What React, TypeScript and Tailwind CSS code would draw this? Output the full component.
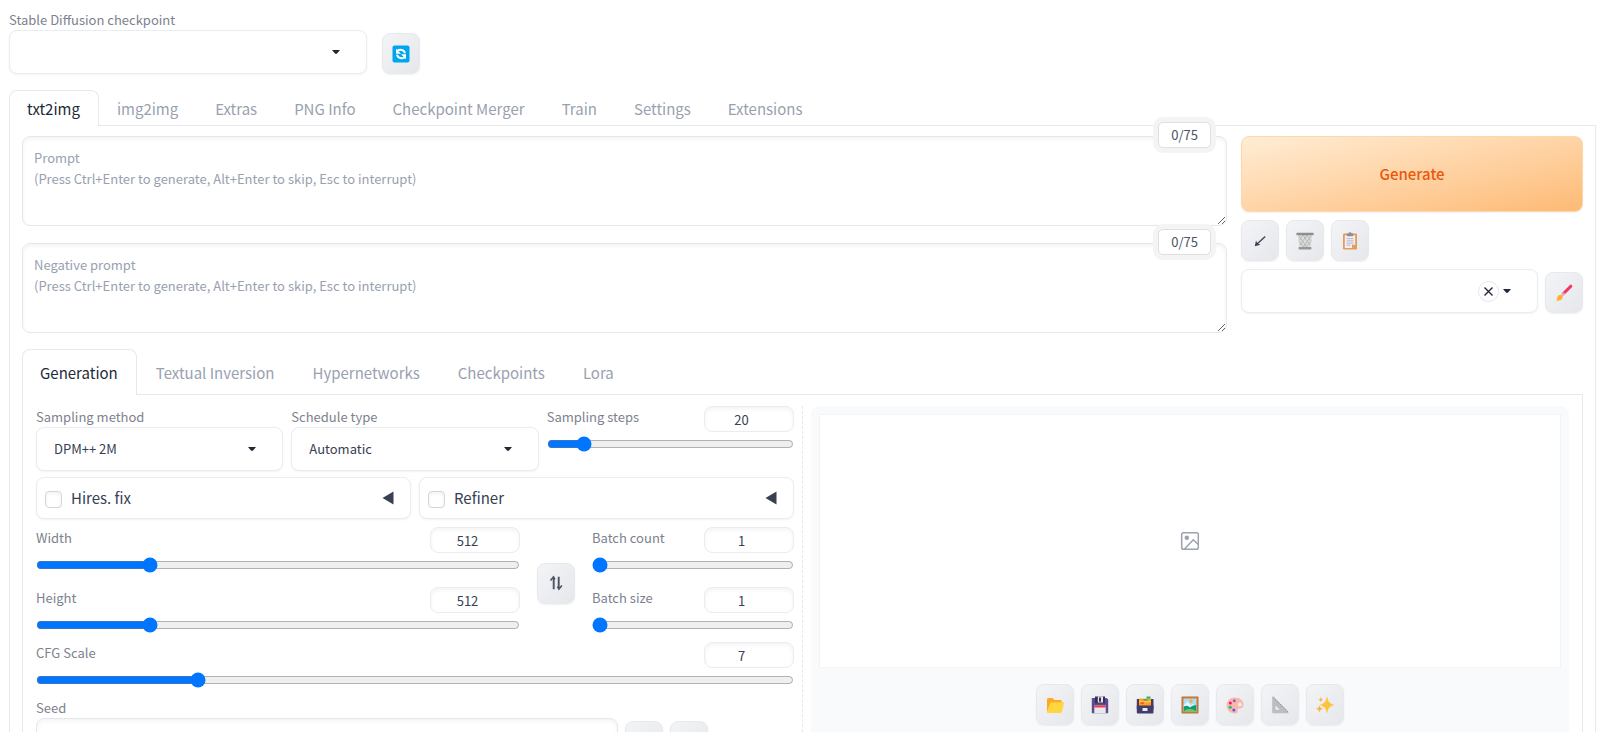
import React, { useId, useState } from "react";

/* ---------- icons ---------- */

const Svg = ({ children, box = 18 }: { children: React.ReactNode; box?: number }) => (
  <svg width={box} height={box} viewBox="0 0 18 18" aria-hidden="true">
    {children}
  </svg>
);

const RefreshIcon = () => (
  <Svg>
    <rect x="0.5" y="0.5" width="17" height="17" rx="2" fill="#00a6ed" />
    <path d="M5.500 5.500C7.500 4.300 12 4.200 13 8.200" fill="none" stroke="#fff" strokeWidth="2" />
    <path d="M4 3.800v5h5z" fill="#fff" />
    <path d="M12.500 12.500C10.500 13.700 6 13.800 5 9.800" fill="none" stroke="#fff" strokeWidth="2" />
    <path d="M14 14.200v-5H9z" fill="#fff" />
  </Svg>
);

const ArrowIcon = () => (
  <Svg>
    <path d="M14.200 4.500 5.500 12.500" stroke="#374151" strokeWidth="1.300" fill="none" />
    <path d="M3.800 14.200 5 8.600l1.300 2.700 3.200 1.500z" fill="#374151" />
  </Svg>
);

const TrashIcon = () => (
  <Svg>
    <path d="M1.800 2.500h14.400l-1.300 13H3.100z" fill="#dcdcdc" />
    <path
      d="M3 4l8 11.500M7 3l7 10M11 3l4 6M3.500 9.500 8 15.500M15 4 7 15.500M11 3 4 13M7 3 3 8.500M14.500 9.500 10 15.500"
      stroke="#adadad"
      strokeWidth="0.800"
      fill="none"
    />
    <rect x="0.500" y="0.800" width="17" height="2.400" rx="0.500" fill="#8e8e8e" />
    <rect x="2.600" y="15" width="12.800" height="2.400" rx="0.500" fill="#979797" />
  </Svg>
);

const ClipboardIcon = () => (
  <Svg>
    <rect x="2" y="1.500" width="14" height="16" rx="1.300" fill="#e39d54" />
    <path d="M3.800 3.300h10.400v9.400l-3.200 3.200H3.800z" fill="#f3eef8" />
    <path d="M11 15.900v-3.200h3.200z" fill="#ef8f4b" />
    <rect x="5.800" y="1.600" width="6.400" height="2.600" rx="0.600" fill="#8d8d93" />
    <circle cx="9" cy="1.600" r="1.400" fill="#8d8d93" />
    <path d="M5.500 6.700h7M5.500 8.900h7M5.500 11.100h7M5.500 13.200h4" stroke="#b0abb8" strokeWidth="0.900" />
  </Svg>
);

const BrushIcon = () => (
  <Svg>
    <path d="M15.800 2.200 8.300 9.700" stroke="#f8315f" strokeWidth="3" strokeLinecap="round" />
    <path d="M8.600 8.200 6.200 10.600l1.700 1.700 2.400-2.400z" fill="#c9b8c9" />
    <path d="M6.600 11c1.500.8 1.400 2.600.6 3.800C5.900 16.800 3 17 1 16.600c1.200-.7 1-1.600 1.300-3 .400-2 2.400-3.300 4.300-2.600z" fill="#ffb02e" />
  </Svg>
);

const FolderIcon = () => (
  <Svg>
    <path d="M1 3.500C1 2.700 1.500 2 2.400 2h4.200l1.800 2h5.800c1 0 1.600.6 1.600 1.500V15H1z" fill="#ffa826" />
    <path d="M4.500 6.200h12.700c.7 0 1 .5.800 1.100l-2 8.300c-.2.900-.8 1.400-1.700 1.400H2.300c-1 0-1.400-.6-1.300-1.300z" fill="#ffd540" />
  </Svg>
);

const FloppyIcon = () => (
  <Svg>
    <path d="M1 2h14.500L17.200 3.500V16.200c0 .6-.4 1-1 1H1.800c-.6 0-1-.4-1-1V2z" fill="#5d4b8f" />
    <path d="M4 0.500h10v6.800H4z" fill="#3b2d55" />
    <path d="M6.800 0.500h5.200v6H6.800z" fill="#e9e6ef" />
    <path d="M8 1.500h2v4.200H8z" fill="#3b2d55" />
    <path d="M3.300 9.500h11.400v7.700H3.300z" fill="#e8e8ec" />
    <path d="M3.300 9.500h11.400v2H3.300z" fill="#ee3f49" />
  </Svg>
);

const CardBoxIcon = () => (
  <Svg>
    <path d="M0.800 3h3v10h-3zM14.500 3h3v10h-3z" fill="#453a69" />
    <path d="M3 2.600h12v8.500H3z" fill="#f9a11d" />
    <path d="M10.500 0.500h4v2.200h-4z" fill="#2bb673" />
    <path d="M3 4.800h12v1.500H3z" fill="#ffc63a" />
    <path d="M7.500 3.200h3.800v1.400H7.500z" fill="#1fa6a0" />
    <path d="M4.500 6.300h3.500v1.500H4.500z" fill="#f0503c" />
    <path d="M0.800 9.500h16.700v7c0 .6-.4.900-.9.900H1.700c-.5 0-.9-.3-.9-.9z" fill="#433b6b" />
    <rect x="6.500" y="12" width="5" height="3" rx="0.500" fill="#eceaf2" />
  </Svg>
);

const PictureIcon = () => (
  <Svg>
    <rect x="0.500" y="0.500" width="17" height="17" rx="0.800" fill="#b97138" />
    <rect x="1.600" y="1.600" width="14.800" height="14.800" fill="#d68b44" />
    <rect x="2.600" y="2.600" width="12.800" height="12.800" fill="#a8dcf8" />
    <circle cx="10" cy="5" r="1.700" fill="#ffa93b" />
    <path d="M2.600 9.500 6.500 5.500l3.300 4 2-1.800 3.600 3V15.400H2.600z" fill="#e8f5fb" />
    <path d="M2.600 10.500c3-1.800 5-.3 6.500 1 2-2.200 4.500-2.700 6.300-2v5.900H2.600z" fill="#109a84" />
    <path d="M2.600 15.400c3-3.300 9-3.300 12.800 0z" fill="#7ccb3e" />
  </Svg>
);

const PaletteIcon = () => (
  <Svg>
    <path
      d="M8.800 1.500c4.800 0 8.700 2.800 8.700 6.800 0 3-2 4.500-4.400 4.300-1.300-.1-1.700.8-1.300 1.900.5 1.500-.6 2.900-2.800 2.900C4 17.400.6 13.800.6 9.400c0-4.500 3.700-7.900 8.200-7.900z"
      fill="#fbb7a8"
    />
    <circle cx="13.800" cy="8.500" r="1.900" fill="#eef0f3" />
    <circle cx="8.300" cy="4.700" r="1.500" fill="#8d65c5" />
    <circle cx="4.300" cy="7" r="1.500" fill="#f0157c" />
    <circle cx="4.300" cy="11.200" r="1.500" fill="#12c47a" />
    <circle cx="7.800" cy="14" r="1.500" fill="#3f5fff" />
  </Svg>
);

const RulerIcon = () => (
  <Svg>
    <path
      d="M1.200.800c0-.6.500-.7.900-.3L17.300 16c.5.500.3 1.200-.4 1.200H2.200c-.6 0-1-.4-1-1zM4.500 9.500v4.300h4.300z"
      fillRule="evenodd"
      fill="#bdbdc0"
    />
    <path d="M2.500 1.500 17 16" stroke="#998ea4" strokeWidth="1.200" strokeDasharray="1.200 1.200" />
  </Svg>
);

const SparklesIcon = () => (
  <Svg>
    <path d="M11 1.200c.9 4.300 2.300 6.300 6.700 7.700-4.400 1.400-5.800 3.400-6.700 7.700-.9-4.300-2.300-6.300-6.700-7.700 4.400-1.400 5.800-3.400 6.700-7.700z" fill="#fcc33c" stroke="#fcc33c" strokeWidth="0.500" />
    <path d="M3.500 9.600c.4 1.900 1.100 2.700 3.100 3.200-2 .5-2.700 1.300-3.100 3.200-.4-1.900-1.100-2.700-3.100-3.200 2-.5 2.700-1.300 3.100-3.200z" fill="#f9b53a" stroke="#f9b53a" strokeWidth="0.400" />
    <path d="M4.800 1.500c.3 1.300.8 1.900 2.100 2.200-1.300.3-1.800.9-2.100 2.200-.3-1.300-.8-1.900-2.100-2.200 1.300-.3 1.800-.9 2.100-2.200z" fill="#f9b53a" stroke="#f9b53a" strokeWidth="0.400" />
  </Svg>
);

const SwapIcon = () => (
  <Svg>
    <path d="M6.700 15.200V4M11.700 2.800V14" stroke="#4b5563" strokeWidth="1.900" fill="none" />
    <path d="M3.500 6.500 6.500 3l1.400 2.500M14.900 11.500l-3 3.500-1.400-2.500" stroke="#4b5563" strokeWidth="1.600" fill="none" />
  </Svg>
);

const DiceIcon = () => (
  <Svg>
    <rect x="1" y="1" width="16" height="16" rx="3" fill="#f4f4f4" stroke="#c5c5c9" />
    <circle cx="5.500" cy="5.500" r="1.500" fill="#433b6b" />
    <circle cx="9" cy="9" r="1.500" fill="#433b6b" />
    <circle cx="12.500" cy="12.500" r="1.500" fill="#433b6b" />
  </Svg>
);

const RecycleIcon = () => (
  <Svg>
    <path d="M6 6l3-4 3 4M14 8l2 5h-5M4 8l-2 5h5" fill="none" stroke="#20a45b" strokeWidth="2" />
  </Svg>
);

const ImagePlaceholderIcon = () => (
  <svg width="20" height="20" viewBox="0 0 20 20" fill="none" stroke="#9ca3af" strokeWidth="1.500" aria-hidden="true">
    <rect x="1.700" y="1.700" width="16.600" height="16.600" rx="1.800" />
    <circle cx="6.800" cy="6.800" r="1.500" fill="#9ca3af" />
    <path d="M4.500 18 13.300 8.800l5 4.700" />
  </svg>
);

const Caret = () => (
  <svg width="8" height="4" viewBox="0 0 8 4" aria-hidden="true">
    <path d="M0 0h8L5 3.500Q4 4.300 3 3.500z" fill="#1f2937" />
  </svg>
);

/* ---------- building blocks ---------- */

const LABEL = "text-[13px] leading-[21px] text-[#7d828e]";
const BOX = "rounded-lg border border-[#ebecef] bg-white shadow-[0_1px_2px_0_rgba(0,0,0,0.05)]";

function ToolButton({ label, children }: { label: string; children: React.ReactNode }) {
  return (
    <button
      type="button"
      aria-label={label}
      className="flex h-[41px] w-[38px] shrink-0 items-center justify-center rounded-lg border border-[#e8e9ec] bg-linear-to-br from-gray-100 to-gray-200 shadow-[0_1px_2px_0_rgba(0,0,0,0.06)]"
    >
      {children}
    </button>
  );
}

function Dropdown({
  label,
  options,
  hideLabel = false,
  clearable = false,
}: {
  label: string;
  options: string[];
  hideLabel?: boolean;
  clearable?: boolean;
}) {
  const id = useId();
  return (
    <div className="flex min-w-0 flex-1 flex-col">
      {!hideLabel && (
        <label htmlFor={id} className={LABEL}>
          {label}
        </label>
      )}
      <div className="relative">
        <select
          id={id}
          aria-label={hideLabel ? label : undefined}
          className={`${BOX} block h-11 w-full appearance-none pl-[17px] pr-12 text-[13px] text-gray-700`}
        >
          {options.map((o) => (
            <option key={o}>{o}</option>
          ))}
        </select>
        <div className="pointer-events-none absolute inset-y-0 right-[27px] flex items-center gap-1">
          {clearable && (
            <button
              type="button"
              aria-label={`Clear ${label}`}
              className="pointer-events-auto flex size-[21px] items-center justify-center rounded-full border border-gray-200 bg-white"
            >
              <svg width="9" height="9" viewBox="0 0 9 9" stroke="#1f2937" strokeWidth="1.400" aria-hidden="true">
                <path d="M0.500 0.500l8 8M8.500 0.500l-8 8" />
              </svg>
            </button>
          )}
          <Caret />
        </div>
      </div>
    </div>
  );
}

function SliderField({ label, min, max, step = 1, initial }: { label: string; min: number; max: number; step?: number; initial: number }) {
  const id = useId();
  const [value, setValue] = useState(initial);
  return (
    <div className="flex min-w-0 flex-1 flex-col gap-1">
      <div className="flex items-start justify-between">
        <label htmlFor={id} className={LABEL}>
          {label}
        </label>
        <input
          type="number"
          aria-label={`${label} value`}
          min={min}
          max={max}
          step={step}
          value={value}
          onChange={(e) => setValue(Number(e.target.value))}
          className="h-[26px] w-[90px] rounded-lg border border-[#ebecef] bg-white text-center text-[13px] text-gray-700 shadow-[inset_0_2px_4px_0_rgba(0,0,0,0.05)]"
        />
      </div>
      <input
        id={id}
        type="range"
        min={min}
        max={max}
        step={step}
        value={value}
        onChange={(e) => setValue(Number(e.target.value))}
        className="m-0 block h-4 w-full"
      />
    </div>
  );
}

function AccordionRow({ label }: { label: string }) {
  return (
    <div className={`${BOX} flex h-[42px] flex-1 items-center justify-between pl-2 pr-4`}>
      <label className="flex items-center gap-[9px] text-[15px] leading-6 text-gray-700">
        <input
          type="checkbox"
          className="mt-0.5 size-[17px] appearance-none rounded border border-gray-300 bg-white shadow-[inset_0_2px_4px_0_rgba(0,0,0,0.05)] checked:bg-blue-600"
        />
        {label}
      </label>
      <button type="button" aria-label={`Expand ${label}`}>
        <svg width="12" height="14" viewBox="0 0 12 14" aria-hidden="true">
          <path d="M0.500 7 11.500 0.500v13z" fill="#374151" />
        </svg>
      </button>
    </div>
  );
}

function PromptBox({ label }: { label: string }) {
  return (
    <div className="relative">
      <textarea
        aria-label={label}
        placeholder={`${label}\n(Press Ctrl+Enter to generate, Alt+Enter to skip, Esc to interrupt)`}
        className="block h-[90px] w-full resize-y rounded-lg border border-[#e6e7ea] bg-white px-[11px] py-2.5 text-[13px] leading-[21px] text-gray-700 shadow-[inset_0_2px_4px_0_rgba(0,0,0,0.05)] placeholder:text-gray-400"
      />
      <span className="absolute -top-3.5 right-4 rounded-[5px] border border-[#dfe0e4] bg-white px-3 text-[13px] leading-6 text-gray-600 shadow-[0_0_0_5px_#f4f4f5]">
        0/75
      </span>
    </div>
  );
}

function TabBar({ tabs, tall = false }: { tabs: string[]; tall?: boolean }) {
  const [active, setActive] = useState(tabs[0]);
  return (
    <div role="tablist" className={`relative flex ${tall ? "gap-px" : ""}`}>
      {tabs.map((t) => (
        <button
          key={t}
          type="button"
          role="tab"
          aria-selected={t === active}
          onClick={() => setActive(t)}
          className={`${tall ? "h-[46px]" : "h-9"} -mb-px rounded-t-lg border border-b-0 pr-[18px] pl-[17px] text-[15px] leading-6 ${
            t === active ? "border-[#e8e9ec] bg-white text-gray-800" : "border-transparent text-gray-400"
          }`}
        >
          {t}
        </button>
      ))}
    </div>
  );
}

/* ---------- page ---------- */

export default function App() {
  return (
    <main className="h-screen overflow-hidden bg-white pt-[9px] pr-1 pl-[9px] font-['Noto_Sans_CJK_SC','Noto_Sans',sans-serif]">
      <div className="flex items-end gap-[15px]">
        <div className="flex w-[358px]">
          <Dropdown label="Stable Diffusion checkpoint" options={[""]} />
        </div>
        <ToolButton label="Refresh checkpoints">
          <RefreshIcon />
        </ToolButton>
      </div>

      <div className="mt-4">
        <TabBar tabs={["txt2img", "img2img", "Extras", "PNG Info", "Checkpoint Merger", "Train", "Settings", "Extensions"]} />
        <section className="border border-[#e8e9ec] px-3 pt-2.5 pb-3">
          <div className="flex gap-3.5">
            <div className="flex min-w-0 flex-1 flex-col gap-[17px]">
              <PromptBox label="Prompt" />
              <PromptBox label="Negative prompt" />
            </div>
            <div className="flex w-[342px] flex-col gap-2">
              <button
                type="button"
                className="h-[76px] rounded-lg border border-[#fed7aa] bg-linear-to-br from-[#ffedd5] to-[#fdba74] text-[15px] font-medium text-[#ea580c] shadow-[0_1px_2px_0_rgba(0,0,0,0.05)]"
              >
                Generate
              </button>
              <div className="flex gap-[7px]">
                <ToolButton label="Read generation parameters">
                  <ArrowIcon />
                </ToolButton>
                <ToolButton label="Clear prompt">
                  <TrashIcon />
                </ToolButton>
                <ToolButton label="Apply styles">
                  <ClipboardIcon />
                </ToolButton>
              </div>
              <div className="flex items-end gap-[7px]">
                <Dropdown label="Styles" options={[""]} hideLabel clearable />
                <ToolButton label="Edit styles">
                  <BrushIcon />
                </ToolButton>
              </div>
            </div>
          </div>

          <div className="mt-4">
            <TabBar tall tabs={["Generation", "Textual Inversion", "Hypernetworks", "Checkpoints", "Lora"]} />
            <section className="flex gap-2 border border-[#e8e9ec] px-[13px] pt-[11px] pb-3">
              <div className="flex min-w-0 flex-1 flex-col">
                <div className="flex gap-2">
                  <Dropdown label="Sampling method" options={["DPM++ 2M", "Euler a"]} />
                  <Dropdown label="Schedule type" options={["Automatic", "Karras"]} />
                  <SliderField label="Sampling steps" min={1} max={150} initial={20} />
                </div>
                <div className="mt-1.5 flex gap-2">
                  <AccordionRow label="Hires. fix" />
                  <AccordionRow label="Refiner" />
                </div>
                <div className="mt-2 flex gap-[17px]">
                  <div className="flex flex-1 flex-col gap-3.5">
                    <SliderField label="Width" min={64} max={2048} step={8} initial={512} />
                    <SliderField label="Height" min={64} max={2048} step={8} initial={512} />
                  </div>
                  <div className="flex items-center pt-1.5">
                    <ToolButton label="Swap width and height">
                      <SwapIcon />
                    </ToolButton>
                  </div>
                  <div className="flex w-[202px] flex-col gap-3.5">
                    <SliderField label="Batch count" min={1} max={100} initial={1} />
                    <SliderField label="Batch size" min={1} max={8} initial={1} />
                  </div>
                </div>
                <div className="mt-[9px] flex">
                  <SliderField label="CFG Scale" min={1} max={30} initial={7} />
                </div>
                <div className="mt-[9px] flex items-end gap-[7px]">
                  <div className="flex w-[582px] flex-col">
                    <label htmlFor="seed" className={LABEL}>
                      Seed
                    </label>
                    <input
                      id="seed"
                      type="number"
                      className="h-11 rounded-lg border border-[#e6e7ea] bg-white px-3 text-[13px] text-gray-700 shadow-[inset_0_2px_4px_0_rgba(0,0,0,0.05)]"
                    />
                  </div>
                  <ToolButton label="Random seed">
                    <DiceIcon />
                  </ToolButton>
                  <ToolButton label="Reuse seed">
                    <RecycleIcon />
                  </ToolButton>
                </div>
              </div>

              <div className="border-l border-dashed border-gray-200" />

              <div className="min-w-0 flex-1">
                <div className="h-full rounded-t-lg bg-gray-50 p-2">
                  <div className="flex h-[254px] items-center justify-center border border-gray-100 bg-white">
                    <ImagePlaceholderIcon />
                  </div>
                  <div className="mt-4 flex justify-center gap-[7px]">
                    <ToolButton label="Open output folder">
                      <FolderIcon />
                    </ToolButton>
                    <ToolButton label="Save image">
                      <FloppyIcon />
                    </ToolButton>
                    <ToolButton label="Save zip archive">
                      <CardBoxIcon />
                    </ToolButton>
                    <ToolButton label="Send to img2img">
                      <PictureIcon />
                    </ToolButton>
                    <ToolButton label="Send to inpaint">
                      <PaletteIcon />
                    </ToolButton>
                    <ToolButton label="Send to extras">
                      <RulerIcon />
                    </ToolButton>
                    <ToolButton label="Upscale">
                      <SparklesIcon />
                    </ToolButton>
                  </div>
                </div>
              </div>
            </section>
          </div>
        </section>
      </div>
    </main>
  );
}
